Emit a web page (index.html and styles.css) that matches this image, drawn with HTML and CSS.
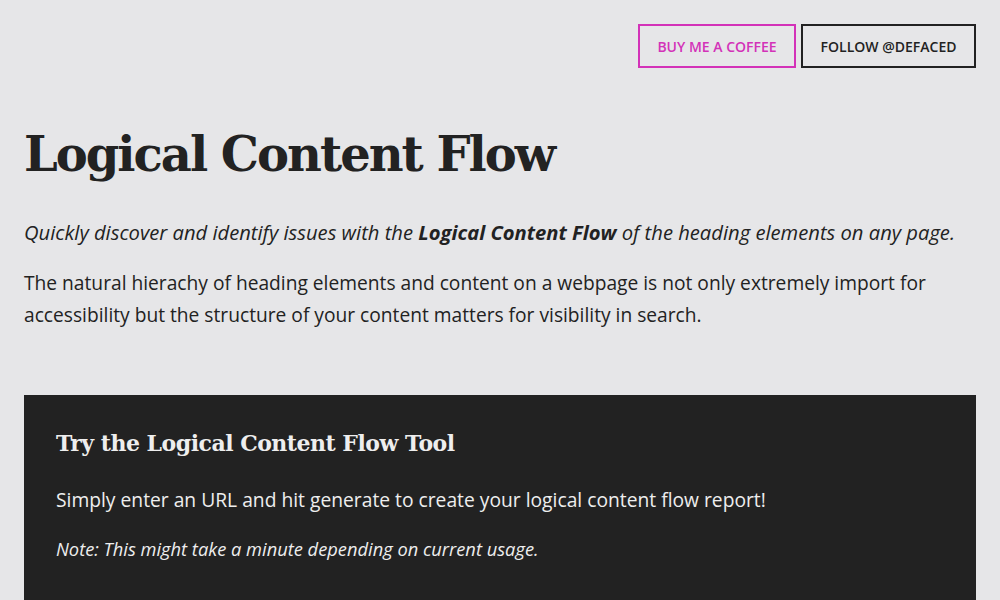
FILE: index.html
```html
<!DOCTYPE html>
<html lang="en">
<head>
<meta charset="utf-8">
<title>Logical Content Flow</title>
<link rel="stylesheet" href="styles.css">
</head>
<body>
<div class="page">
  <nav class="top-nav">
    <a class="btn btn-pink" href="#">Buy me a coffee</a>
    <a class="btn btn-dark" href="#">Follow @defaced</a>
  </nav>
  <h1 class="title">Logical Content Flow</h1>
  <p class="lead">Quickly discover and identify issues with the <strong>Logical Content Flow</strong> of the heading elements on any page.</p>
  <p class="intro">The natural hierachy of heading elements and content on a webpage is not only extremely import for accessibility but the structure of your content matters for visibility in search.</p>
  <section class="tool">
    <h2 class="tool-title">Try the Logical Content Flow Tool</h2>
    <p class="tool-text">Simply enter an URL and hit generate to create your logical content flow report!</p>
    <p class="tool-note">Note: This might take a minute depending on current usage.</p>
  </section>
</div>
</body>
</html>
```
FILE: styles.css
```css
html, body {
  margin: 0;
  padding: 0;
  background: #e6e6e8;
  color: #222222;
  font-family: "Open Sans", "Liberation Sans", sans-serif;
}
.page {
  padding: 24px 24px 0 24px;
}
.top-nav {
  display: flex;
  justify-content: flex-end;
  gap: 5px;
}
.btn {
  display: inline-flex;
  align-items: center;
  height: 44px;
  box-sizing: border-box;
  padding: 0 17.5px;
  border: 2px solid #222;
  text-decoration: none;
  text-transform: uppercase;
  font-size: 14px;
  font-weight: 600;
  color: #222;
}
.btn-pink {
  border-color: #d332b8;
  color: #d332b8;
}
.title {
  font-family: "DejaVu Serif", serif;
  font-weight: bold;
  font-size: 48px;
  line-height: 1.2;
  margin: 58px 0 0 0;
  letter-spacing: -2px;
}
.lead {
  font-style: italic;
  font-size: 20.2px;
  line-height: 32px;
  margin: 32px 0 0 0;
}
.lead strong {
  font-weight: 700;
}
.intro {
  font-size: 19.2px;
  line-height: 32px;
  margin: 19px 0 0 0;
}
.tool {
  background: #222222;
  color: #eeeeee;
  margin-top: 64px;
  padding: 32px 32px 40px 32px;
}
.tool-title {
  font-family: "DejaVu Serif", serif;
  font-weight: bold;
  font-size: 22px;
  line-height: 32px;
  letter-spacing: -0.5px;
  margin: 0;
}
.tool-text {
  font-size: 19.25px;
  line-height: 32px;
  margin: 25px 0 0 0;
}
.tool-note {
  font-style: italic;
  font-size: 18.3px;
  line-height: 28px;
  margin: 19px 0 0 0;
}
```
